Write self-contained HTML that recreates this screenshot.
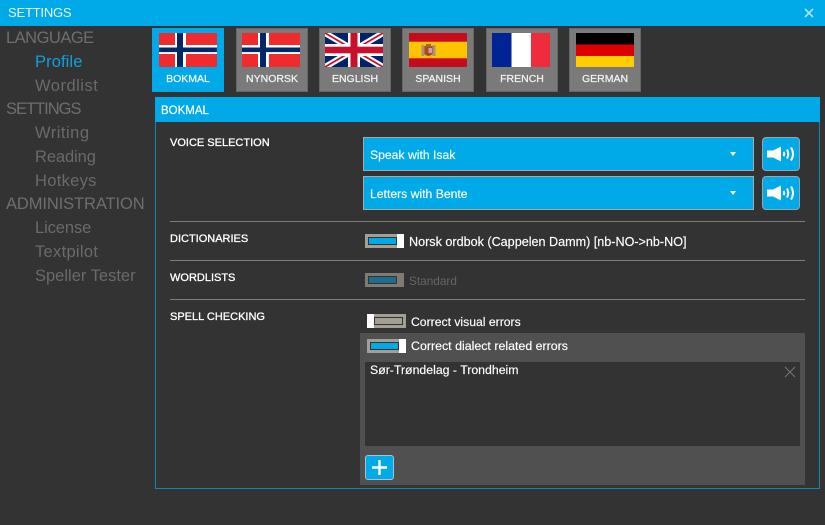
<!DOCTYPE html>
<html><head><meta charset="utf-8">
<style>
html,body{margin:0;padding:0;background:#333333}
body{width:825px;height:525px;position:relative;overflow:hidden;font-family:"Liberation Sans",sans-serif}
.a{position:absolute;white-space:nowrap}
.h{left:6px;font-size:16.5px;color:#6e6e6e;line-height:20px}
.s{left:35px;font-size:16.5px;color:#6a6a6a;line-height:20px}
.tab{position:absolute;top:28px;width:72px;height:64px;box-sizing:border-box;background:#7a7a7a;border:1px solid #666}
.tab span{position:absolute;left:0;right:0;top:43px;text-align:center;font-size:10.5px;color:#f2f2f2;line-height:14px;-webkit-text-stroke:.25px #f2f2f2}
.tab svg{position:absolute;left:6px;top:4px;width:58px;height:34px;display:block}
.l{left:170px;font-size:11px;color:#fff;line-height:14px;-webkit-text-stroke:.3px #fff}
.d{left:170px;width:635px;height:1px;background:#7c7c7c}
.sel{position:absolute;left:363px;width:391px;height:34px;box-sizing:border-box;background:#00a9e8;border:1px solid #a9a9a9;color:#fff;font-size:12.2px;line-height:34px;padding-left:6px;-webkit-text-stroke:.15px #fff}
.sel i{position:absolute;left:366px;top:14px;width:0;height:0;border:3.5px solid transparent;border-top:4px solid #fff;border-bottom:0}
.spk{position:absolute;left:762px;width:38px;height:34px;box-sizing:border-box;background:#00a9e8;border:1px solid #8fa9b5;border-radius:4px}
.t{position:absolute;width:39px;height:14px;background:#a49f94}
.t b{position:absolute;left:4px;top:4px;width:27px;height:6px;background:#00a9e8;outline:1px solid #333}
.t u{position:absolute;right:0;top:0;width:7px;height:14px;background:#fff}
.tx{font-size:12.4px;color:#fff;line-height:14px;-webkit-text-stroke:.15px #fff}
</style></head>
<body>
<div class="a" style="left:0;top:0;width:825px;height:26px;background:#00a9e8"></div>
<div class="a" style="left:8px;top:5px;font-size:13px;line-height:16px;color:#e6f6fd;letter-spacing:-.2px">SETTINGS</div>
<svg class="a" style="left:803px;top:7px" width="12" height="12"><path d="M2 2L10 10M10 2L2 10" stroke="#a9e2f8" stroke-width="1.6"/></svg>

<div class="a h" style="top:28px;letter-spacing:-.5px">LANGUAGE</div>
<div class="a s" style="top:52px;color:#0f9fe0;letter-spacing:.1px">Profile</div>
<div class="a s" style="top:76px;letter-spacing:.5px">Wordlist</div>
<div class="a h" style="top:99px;letter-spacing:-1px">SETTINGS</div>
<div class="a s" style="top:123px;letter-spacing:.5px">Writing</div>
<div class="a s" style="top:147px;letter-spacing:-.1px">Reading</div>
<div class="a s" style="top:171px;letter-spacing:.3px">Hotkeys</div>
<div class="a h" style="top:194px;letter-spacing:-.1px">ADMINISTRATION</div>
<div class="a s" style="top:218px;letter-spacing:-.1px">License</div>
<div class="a s" style="top:242px;letter-spacing:.3px">Textpilot</div>
<div class="a s" style="top:266px">Speller Tester</div>

<div class="tab" style="left:152px;background:#00a9e8;border-color:#00a9e8"><svg viewBox="0 0 58 34"><rect width="58" height="34" fill="#ef2b2d"/><rect x="16" width="11" height="34" fill="#fff"/><rect y="12" width="58" height="9" fill="#fff"/><rect x="18" width="6" height="34" fill="#002868"/><rect y="14.500" width="58" height="4.600" fill="#002868"/></svg><span>BOKMAL</span></div>
<div class="tab" style="left:236px"><svg style="left:5px" viewBox="0 0 58 34"><rect width="58" height="34" fill="#ef2b2d"/><rect x="16" width="11" height="34" fill="#fff"/><rect y="12" width="58" height="9" fill="#fff"/><rect x="18" width="6" height="34" fill="#002868"/><rect y="14.500" width="58" height="4.600" fill="#002868"/></svg><span>NYNORSK</span></div>
<div class="tab" style="left:319px"><svg style="left:5px" viewBox="0 0 58 34"><rect width="58" height="34" fill="#012169"/><path d="M0 0L58 34M58 0L0 34" stroke="#fff" stroke-width="6"/><path d="M0 0L58 34M58 0L0 34" stroke="#c8102e" stroke-width="1.800"/><rect x="23" width="12" height="34" fill="#fff"/><rect y="11" width="58" height="12" fill="#fff"/><rect x="25.500" width="7" height="34" fill="#c8102e"/><rect y="13.700" width="58" height="6.600" fill="#c8102e"/></svg><span>ENGLISH</span></div>
<div class="tab" style="left:402px"><svg viewBox="0 0 58 34"><rect width="58" height="34" fill="#c60b1e"/><rect y="8.700" width="58" height="16.600" fill="#ffc400"/><rect x="12.500" y="12" width="3" height="11" fill="#a8927a"/><rect x="23.500" y="12" width="3" height="11" fill="#a8927a"/><path d="M15.500 13H23.500V21Q19.500 25 15.500 21Z" fill="#b5451d"/><rect x="17" y="11" width="5" height="3" fill="#9a6a1e"/><rect x="19.500" y="15" width="3.500" height="5" fill="#c9a0c0"/></svg><span>SPANISH</span></div>
<div class="tab" style="left:486px"><svg style="left:5px" viewBox="0 0 58 34"><rect width="58" height="34" fill="#fff"/><rect width="19.500" height="34" fill="#002395"/><rect x="39" width="19" height="34" fill="#ef2b3c"/></svg><span>FRENCH</span></div>
<div class="tab" style="left:569px"><svg viewBox="0 0 58 34"><rect width="58" height="11.500" fill="#000"/><rect y="11.500" width="58" height="11.500" fill="#dd0000"/><rect y="23" width="58" height="11" fill="#ffce00"/></svg><span>GERMAN</span></div>

<div class="a" style="left:155px;top:97px;width:665px;height:392px;box-sizing:border-box;border:1px solid #0b88b8"></div>
<div class="a" style="left:155px;top:97px;width:665px;height:25px;background:#00a9e8"></div>
<div class="a" style="left:161px;top:104px;font-size:11.5px;line-height:14px;color:#fff;-webkit-text-stroke:.2px #fff">BOKMAL</div>

<div class="a l" style="top:136px">VOICE SELECTION</div>
<div class="sel" style="top:137px">Speak with Isak<i></i></div>
<div class="spk" style="top:137px"><svg width="36" height="32" viewBox="0 0 36 32"><path d="M4 12.500H10L18 8.500V23.500L10 19.500H4Z" fill="#fff"/><path d="M20.500 14Q22 16 20.500 18M24 11.500Q26.500 16 24 20.500M28 9.500Q32 16 28 22.500" fill="none" stroke="#fff" stroke-width="2"/></svg></div>
<div class="sel" style="top:176px">Letters with Bente<i></i></div>
<div class="spk" style="top:176px"><svg width="36" height="32" viewBox="0 0 36 32"><path d="M4 12.500H10L18 8.500V23.500L10 19.500H4Z" fill="#fff"/><path d="M20.500 14Q22 16 20.500 18M24 11.500Q26.500 16 24 20.500M28 9.500Q32 16 28 22.500" fill="none" stroke="#fff" stroke-width="2"/></svg></div>

<div class="a d" style="top:221px"></div>
<div class="a l" style="top:232px">DICTIONARIES</div>
<div class="t" style="left:365px;top:234px"><b></b><u></u></div>
<div class="a tx" style="left:409px;top:235px;font-size:12.6px">Norsk ordbok (Cappelen Damm) [nb-NO-&gt;nb-NO]</div>

<div class="a d" style="top:260px"></div>
<div class="a l" style="top:271px">WORDLISTS</div>
<div class="t" style="left:365px;top:273px;background:#7f7b72"><b style="background:#1f6d8e"></b></div>
<div class="a tx" style="left:409px;top:274px;color:#666;-webkit-text-stroke:0;font-size:11.8px">Standard</div>

<div class="a d" style="top:299px"></div>
<div class="a l" style="top:310px">SPELL CHECKING</div>
<div class="t" style="left:367px;top:314px"><b style="background:#a49f94;left:8px;width:27px"></b><u style="left:0;right:auto"></u></div>
<div class="a tx" style="left:411px;top:315px;font-size:12.2px">Correct visual errors</div>

<div class="a" style="left:360px;top:333px;width:445px;height:152px;background:#505050"></div>
<div class="t" style="left:367px;top:339px"><b></b><u></u></div>
<div class="a tx" style="left:411px;top:339px">Correct dialect related errors</div>
<div class="a" style="left:365px;top:362px;width:435px;height:84px;background:#333;"></div>
<div class="a tx" style="left:370px;top:363px;font-size:12.3px">Sør-Trøndelag - Trondheim</div>
<svg class="a" style="left:784px;top:366px" width="12" height="12"><path d="M1 1L11 11M11 1L1 11" stroke="#777" stroke-width="1"/></svg>
<div class="a" style="left:365px;top:455px;width:29px;height:25px;box-sizing:border-box;background:#00a9e8;border:1px solid #9fc4d4;border-radius:3px"><svg style="display:block" width="27" height="23"><path d="M6 11.500H21M13.500 4V19" stroke="#fff" stroke-width="2.400"/></svg></div>
</body></html>
